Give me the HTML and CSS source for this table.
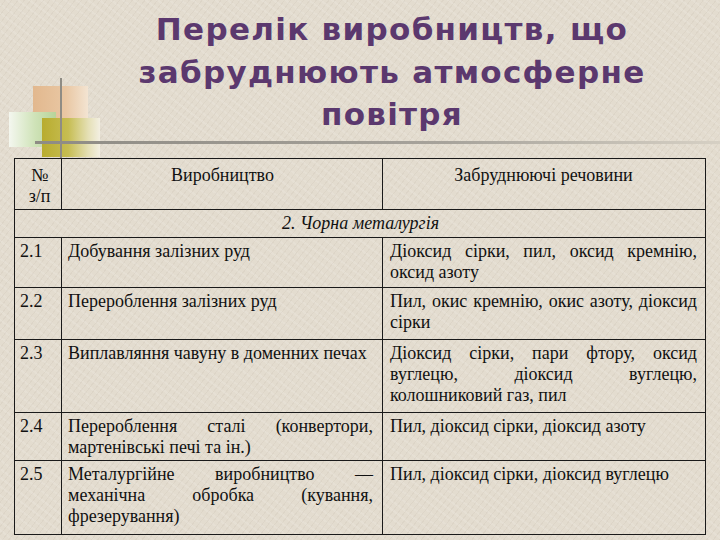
FILE: index.html
```html
<!DOCTYPE html>
<html>
<head>
<meta charset="utf-8">
<title>Перелік виробництв</title>
<link rel="stylesheet" href="styles.css">
</head>
<body>
<div class="slide">
  <header class="head">
    <div class="deco">
      <div class="sq sq-orange"></div>
      <div class="sq sq-green"></div>
      <div class="sq sq-olive"></div>
      <div class="vline"></div>
      <div class="hline"></div>
    </div>
    <h1 class="title">Перелік виробництв, що<br>забруднюють атмосферне<br>повітря</h1>
  </header>
  <table class="tbl">
    <colgroup>
      <col class="c1"><col class="c2"><col class="c3">
    </colgroup>
    <tr class="hdr">
      <td class="num center">№<br>з/п</td>
      <td class="center">Виробництво</td>
      <td class="center">Забруднюючі речовини</td>
    </tr>
    <tr class="sect">
      <td colspan="3" class="center"><i>2. Чорна металургія</i></td>
    </tr>
    <tr class="r1">
      <td class="num">2.1</td>
      <td>Добування залізних руд</td>
      <td class="just">Діоксид сірки, пил, оксид кремнію, оксид азоту</td>
    </tr>
    <tr class="r2">
      <td class="num">2.2</td>
      <td>Перероблення залізних руд</td>
      <td class="just">Пил, окис кремнію, окис азоту, діоксид сірки</td>
    </tr>
    <tr class="r3">
      <td class="num">2.3</td>
      <td>Виплавляння чавуну в доменних печах</td>
      <td class="just">Діоксид сірки, пари фтору, оксид вуглецю, діоксид вуглецю, колошниковий газ, пил</td>
    </tr>
    <tr class="r4">
      <td class="num">2.4</td>
      <td class="just">Перероблення сталі (конвертори, мартенівські печі та ін.)</td>
      <td>Пил, діоксид сірки, діоксид азоту</td>
    </tr>
    <tr class="r5">
      <td class="num">2.5</td>
      <td class="just">Металургійне виробництво — механічна обробка (кування, фрезерування)</td>
      <td>Пил, діоксид сірки, діоксид вуглецю</td>
    </tr>
  </table>
</div>
</body>
</html>
```
FILE: styles.css
```css
html, body {
  margin: 0;
  padding: 0;
}
body {
  width: 720px;
  height: 540px;
  overflow: hidden;
  background-color: #e3dccf;
  background-image:
    repeating-linear-gradient(37deg, rgba(255,255,255,0.10) 0 2px, rgba(0,0,0,0) 2px 7px),
    repeating-linear-gradient(-52deg, rgba(120,100,80,0.06) 0 1px, rgba(0,0,0,0) 1px 5px);
}
.slide {
  width: 720px;
  height: 540px;
}
.head {
  position: relative;
  height: 158px;
}
.deco {
  position: absolute;
  left: 0;
  top: 0;
  width: 720px;
  height: 158px;
}
.sq { position: absolute; }
.sq-orange {
  left: 33px; top: 86px; width: 55px; height: 40px;
  background: linear-gradient(90deg, #e2b88e 0%, #e9c7a3 60%, #f3e4d2 100%);
}
.sq-green {
  left: 9px; top: 112px; width: 47px; height: 35px;
  background: linear-gradient(90deg, #f4f7ef 0%, #cfe3b8 55%, #b8d39a 100%);
}
.sq-olive {
  left: 42px; top: 118px; width: 58px; height: 39px;
  background: linear-gradient(90deg, #b8ac2e 0%, #c6bd52 45%, #e5e0b6 80%, #f3efe2 100%);
}
.vline {
  position: absolute;
  left: 60px; top: 78px; width: 2px; height: 80px;
  background: #8f8c84;
}
.hline {
  position: absolute;
  left: 35px; top: 141px; width: 685px; height: 3px;
  background: linear-gradient(90deg, #8e8b84 0%, #a7a39b 60%, #d6d0c4 100%);
}
.title {
  position: relative;
  margin: 0;
  padding: 8px 0 0 64px;
  text-align: center;
  font-family: "DejaVu Sans", "Open Sans", sans-serif;
  font-weight: 700;
  font-size: 31px;
  line-height: 42.5px;
  color: #5b386e;
  letter-spacing: 1.3px;
}
.tbl {
  margin-left: 14px;
  width: 691px;
  border-collapse: collapse;
  table-layout: fixed;
}
.c1 { width: 47px; }
.c2 { width: 321px; }
.c3 { width: 323px; }
.tbl td {
  font-family: "Liberation Serif", "Times New Roman", serif;
  font-size: 18px;
  line-height: 21px;
  color: #111;
  border: 1px solid #1a1a1a;
  vertical-align: top;
  padding: 3px 5px 0 6px;
}
.tbl td.num { padding-left: 5px; padding-right: 2px; }
.tbl td.just:nth-child(2) { padding-right: 9px; }
.tbl td:nth-child(3) { padding-left: 7px; padding-right: 8px; }
.center { text-align: center; }
.just { text-align: justify; }
.hdr td { padding-top: 6px; }
.hdr { height: 51px; }
.sect { height: 28px; }
.r1 { height: 50px; }
.r2 { height: 52px; }
.r3 { height: 73px; }
.r4 { height: 48px; }
.r5 { height: 74px; }
```
